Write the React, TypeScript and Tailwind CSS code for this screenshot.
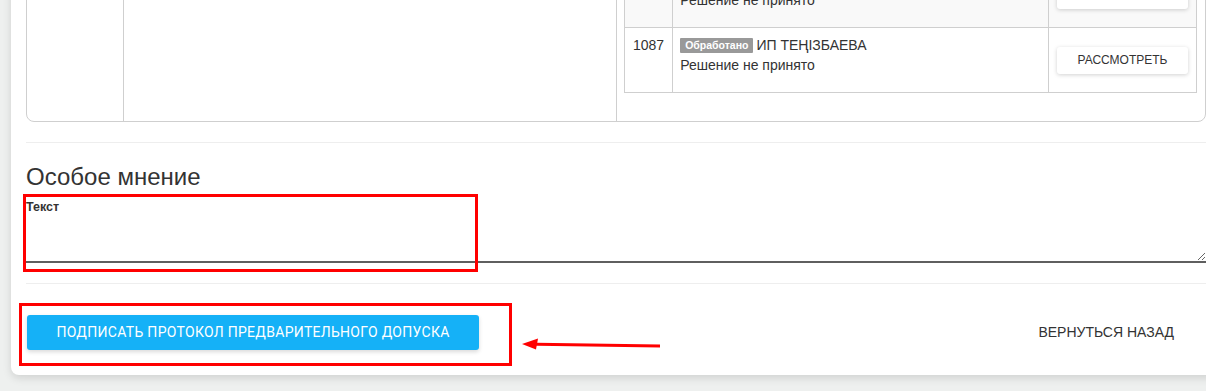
import React from "react";

// Одна строка таблицы заявок
function AppRow({ num, name, status, striped }: { num: string; name: string; status: string; striped?: boolean }) {
  return (
    <tr className={`h-[65px] ${striped ? "bg-[#f9f9f9]" : "bg-white"}`}>
      <td className="border border-[#cfcfcf] px-2 pt-[7px] align-top w-[46px] text-[14px] leading-[20px] text-[#333]">{num}</td>
      <td className="border border-[#cfcfcf] pl-[7px] pr-2 pt-[7px] align-top w-[376px] text-[14px] leading-[20px] text-[#333]">
        <span className="inline-block bg-[#999] text-white font-bold text-[10.5px] leading-[15px] px-[5px] mr-[3px] align-[1px] rounded-[1px]">
          Обработано
        </span>
        {name}
        <br />
        {status}
      </td>
      <td className="border border-[#cfcfcf] px-2 align-middle">
        <button className="w-[131px] h-[27px] bg-white rounded-[3px] text-[12px] text-[#333] shadow-[0_1px_4px_rgba(0,0,0,0.18)]">
          РАССМОТРЕТЬ
        </button>
      </td>
    </tr>
  );
}

export default function App() {
  return (
    <div className="relative w-[1206px] h-[391px] overflow-hidden bg-[#eef0ef] font-['Liberation_Sans','DejaVu_Sans',sans-serif]">
      <div className="ml-[11px] -mt-[61px] w-[1210px] bg-white rounded-b-lg shadow-[0_3px_8px_rgba(0,0,0,0.13)] px-[15px] pt-[15px] pb-[25px]">
        {/* блок с колонками */}
        <div className="flex border border-[#cfcfcf] rounded-lg">
          <div className="w-[97px] border-r border-[#cfcfcf]" />
          <div className="w-[493px] border-r border-[#cfcfcf]" />
          <div className="flex-1 pt-[7px] pl-[7px] pr-[8px] pb-[28px]">
            <table className="w-full border-collapse">
              <tbody>
                <AppRow num="1086" name="ТОО КОМПАНИЯ" status="Решение не принято" striped />
                <AppRow num="1087" name="ИП ТЕҢІЗБАЕВА" status="Решение не принято" />
              </tbody>
            </table>
          </div>
        </div>

        <hr className="mt-[20px] border-0 border-t border-[#eeeeee]" />

        <h3 className="mt-[20px] mb-[10px] text-[24px] leading-[27px] text-[#333]">Особое мнение</h3>

        <div>
          <label className="block text-[12.5px] leading-[15px] font-bold text-[#333]">Текст</label>
          <textarea className="block w-full h-[48px] border-0 border-b-2 border-[#5f5f5f] outline-none resize-y bg-white" />
        </div>

        <hr className="mt-[20px] border-0 border-t border-[#eeeeee]" />

        <div className="mt-[31px] flex items-center justify-between">
          <button className="ml-[1px] w-[452px] h-[35px] rounded-[3px] bg-[#15b1f7] text-white text-[14px] tracking-[0.3px] font-['Roboto',sans-serif] shadow-[0_2px_4px_rgba(0,0,0,0.15)]">
            ПОДПИСАТЬ ПРОТОКОЛ ПРЕДВАРИТЕЛЬНОГО ДОПУСКА
          </button>
          <button className="mr-[32px] text-[14px] text-[#333]">ВЕРНУТЬСЯ НАЗАД</button>
        </div>
      </div>

      {/* красные пометки поверх скриншота */}
      <div className="absolute left-[23px] top-[194px] w-[455px] h-[78px] border-[3px] border-[#ff0000]" />
      <div className="absolute left-[19px] top-[303px] w-[493px] h-[63px] border-[3px] border-[#ff0000]" />
      <svg className="absolute left-[518px] top-[336px]" width="146" height="18" viewBox="0 0 146 18">
        <path d="M18 8.2 L142 10" stroke="#ff0000" strokeWidth="3" />
        <path d="M4 8 L20 2.5 L18 13.5 Z" fill="#ff0000" />
      </svg>
    </div>
  );
}
